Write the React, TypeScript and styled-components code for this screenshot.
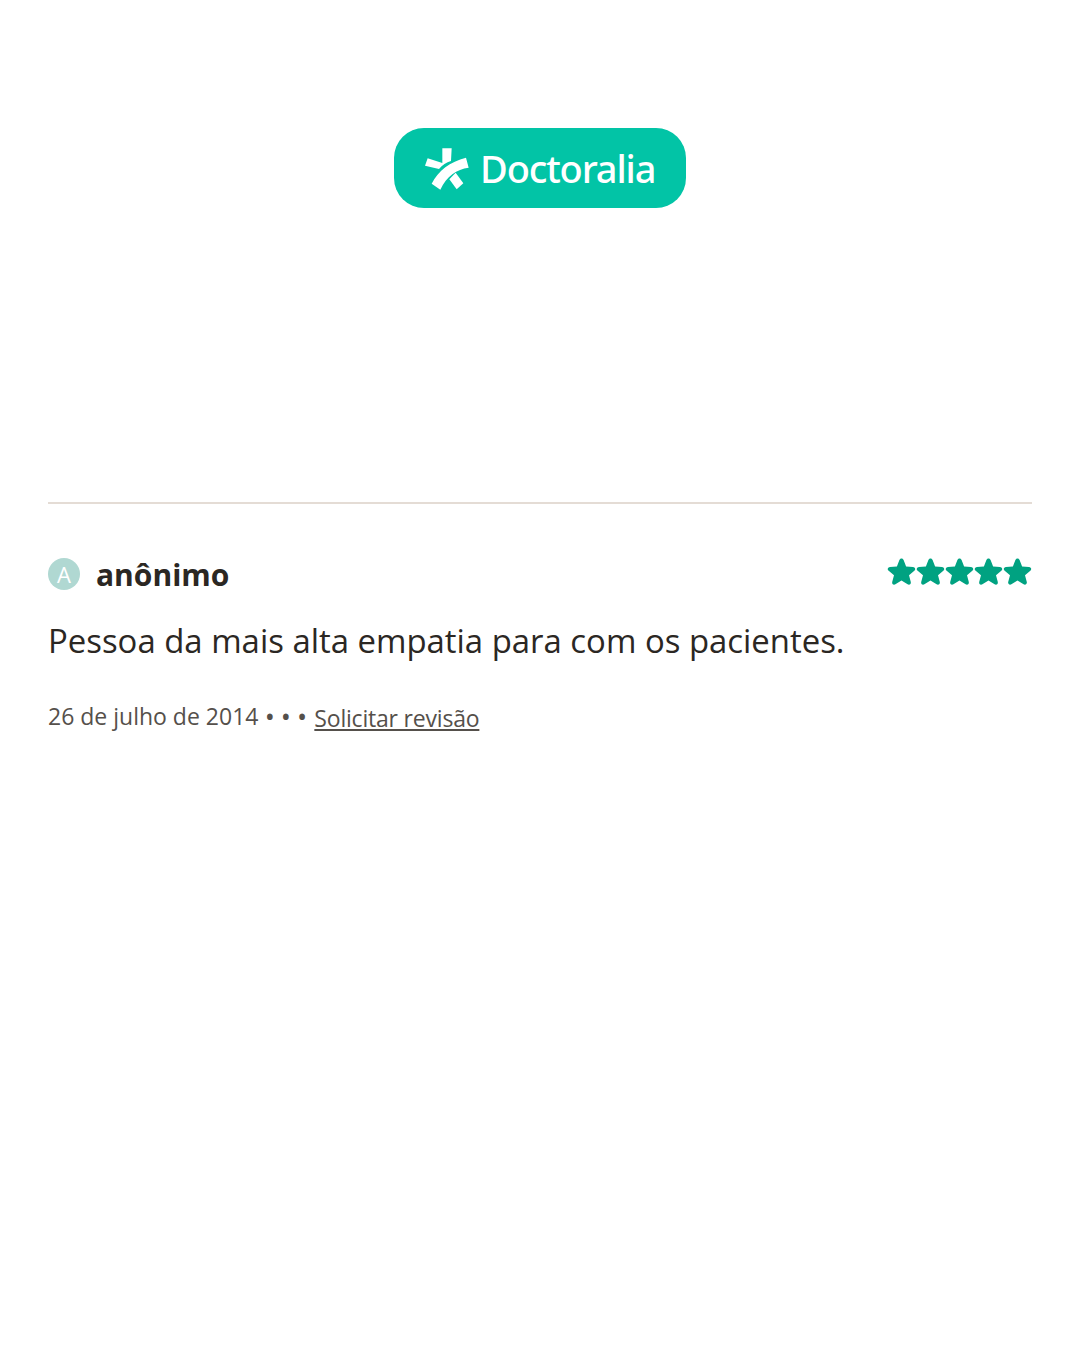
import styled, { createGlobalStyle } from 'styled-components';

const GlobalStyle = createGlobalStyle`
  html, body {
    margin: 0;
    padding: 0;
    background: #fff;
  }
`;

const Page = styled.div`
  width: 1080px;
  height: 1350px;
  box-sizing: border-box;
  padding: 128px 48px 0;
  font-family: 'Open Sans', 'Noto Sans', sans-serif;
  color: #2b2723;
  overflow: hidden;
`;

const LogoRow = styled.div`
  display: flex;
  justify-content: center;
`;

const LogoBadge = styled.div`
  display: flex;
  align-items: center;
  width: 292px;
  height: 80px;
  box-sizing: border-box;
  padding-left: 21px;
  border-radius: 30px;
  background-color: #02c4a6;
`;

const LogoText = styled.span`
  font-family: 'Noto Sans', sans-serif;
  font-size: 38px;
  font-weight: 500;
  letter-spacing: -1.15px;
  line-height: 80px;
  color: #fff;
`;

const Divider = styled.hr`
  height: 2px;
  margin: 294px 0 0;
  border: none;
  background-color: #e4dcd5;
`;

const ReviewHead = styled.div`
  display: flex;
  justify-content: space-between;
  align-items: flex-start;
  margin-top: 52px;
`;

const Author = styled.div`
  display: flex;
  align-items: center;
  gap: 16px;
  height: 36px;
`;

const Avatar = styled.div`
  display: flex;
  justify-content: center;
  align-items: center;
  width: 32px;
  height: 32px;
  border-radius: 50%;
  background-color: #b0d8d2;
  color: #fff;
  font-size: 22px;
`;

const AuthorName = styled.span`
  font-size: 30px;
  font-weight: 700;
  line-height: 36px;
  position: relative;
  top: 1px;
`;

const Stars = styled.div`
  display: flex;
  margin-top: 1px;
`;

const Comment = styled.p`
  margin: 26px 0 0;
  font-size: 32.9px;
  line-height: 46px;
  font-weight: 400;
  color: #2b2723;
`;

const Meta = styled.div`
  display: flex;
  align-items: baseline;
  margin-top: 36px;
  font-size: 23px;
  line-height: 32px;
  color: #55504b;
`;

const Dots = styled.span`
  margin-left: 7px;
  word-spacing: 1.5px;
  font-weight: 600;
`;

const ReviewLink = styled.a`
  margin-left: 8px;
  color: #55504b;
  letter-spacing: -0.2px;
  text-decoration: underline;
  position: relative;
  top: 2px;
`;

const Star = () => (
  <svg width="29" height="30" viewBox="0 0 29 30" style={{ display: 'block' }}>
    <path
      d="M14.5 1.500c1 0 1.700.6 2.100 1.600l2.500 6.500 6.900.4c2.200.1 3 2.400 1.300 3.800l-5.300 4.400 1.800 6.700c.5 2.100-1.400 3.500-3.200 2.400l-6.100-3.800-6.100 3.800c-1.800 1.100-3.700-.3-3.200-2.400l1.800-6.700-5.300-4.400c-1.700-1.400-.9-3.700 1.300-3.800l6.900-.4 2.500-6.500c.4-1 1.100-1.600 2.100-1.600z"
      fill="#00a281"
    />
  </svg>
);

// drawn over a 3x crop of the logo, hence the viewBox
const LogoMark = () => (
  <svg width="65" height="55" viewBox="0 0 195 165" style={{ display: 'block' }}>
    <g fill="#fff">
      <path d="M82 22 L110 22 L108 60 C94 64 82 72 72 84 L30 74 L38 52 L82 66 Z" />
      <path d="M153 50 L161 80 C125 85 95 105 76 146 L50 128 C70 88 105 62 153 50 Z" />
      <path d="M122 95 L145 127 L125 145 L103 115 Z" />
    </g>
  </svg>
);

export default function App() {
  return (
    <Page>
      <GlobalStyle />
      <LogoRow>
        <LogoBadge>
          <LogoMark />
          <LogoText>Doctoralia</LogoText>
        </LogoBadge>
      </LogoRow>
      <Divider />
      <ReviewHead>
        <Author>
          <Avatar>A</Avatar>
          <AuthorName>anônimo</AuthorName>
        </Author>
        <Stars>
          {[0, 1, 2, 3, 4].map((i) => (
            <Star key={i} />
          ))}
        </Stars>
      </ReviewHead>
      <Comment>Pessoa da mais alta empatia para com os pacientes.</Comment>
      <Meta>
        26 de julho de 2014
        <Dots>• • •</Dots>
        <ReviewLink href="#">Solicitar revisão</ReviewLink>
      </Meta>
    </Page>
  );
}
